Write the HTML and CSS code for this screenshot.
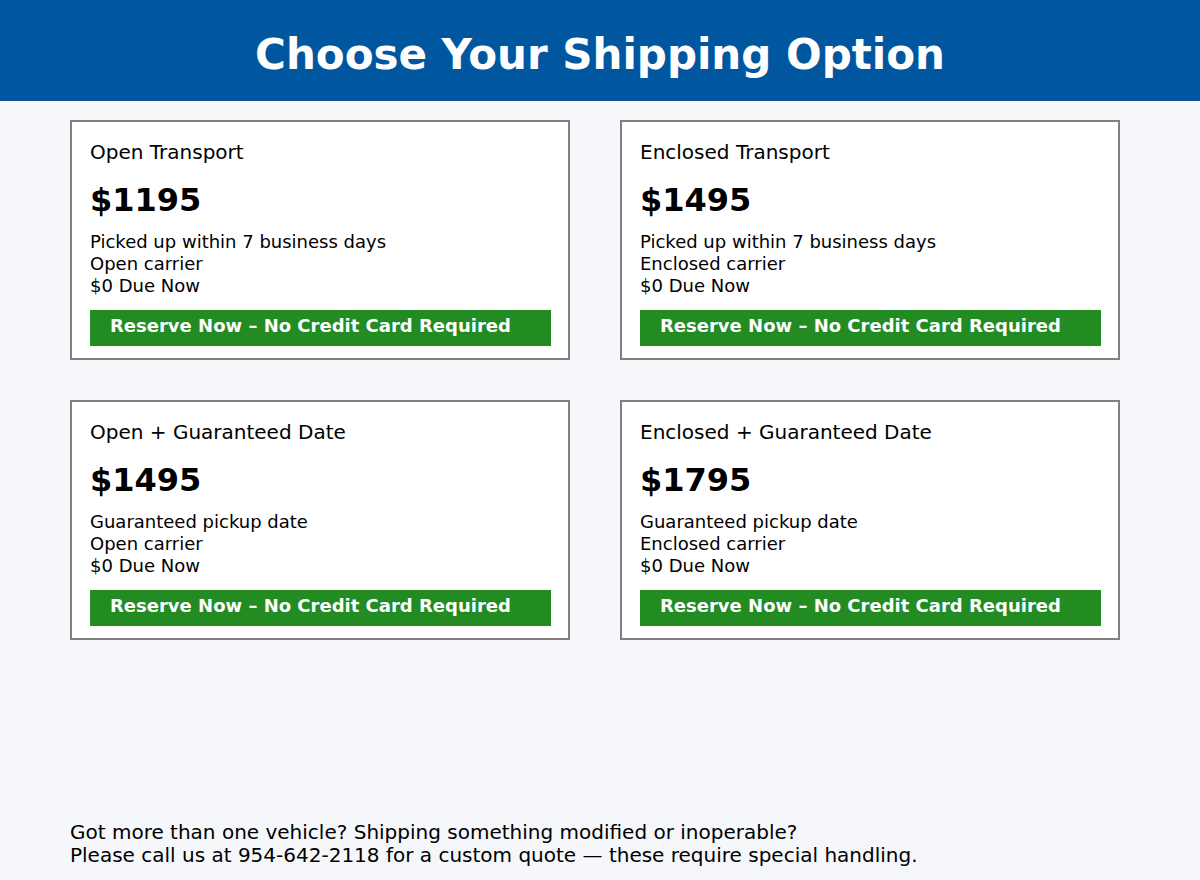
FILE: index.html
```html
<!DOCTYPE html>
<html lang="en">
<head>
<meta charset="utf-8">
<title>Choose Your Shipping Option</title>
<link rel="stylesheet" href="styles.css">
</head>
<body>
<header class="top">
  <h1 class="top-title">Choose Your Shipping Option</h1>
</header>
<main class="options">
  <section class="card">
    <h2 class="card-title">Open Transport</h2>
    <div class="price">$1195</div>
    <ul class="details">
      <li>Picked up within 7 business days</li>
      <li>Open carrier</li>
      <li>$0 Due Now</li>
    </ul>
    <a class="reserve" href="#">Reserve Now – No Credit Card Required</a>
  </section>
  <section class="card">
    <h2 class="card-title">Enclosed Transport</h2>
    <div class="price">$1495</div>
    <ul class="details">
      <li>Picked up within 7 business days</li>
      <li>Enclosed carrier</li>
      <li>$0 Due Now</li>
    </ul>
    <a class="reserve" href="#">Reserve Now – No Credit Card Required</a>
  </section>
  <section class="card">
    <h2 class="card-title">Open + Guaranteed Date</h2>
    <div class="price">$1495</div>
    <ul class="details">
      <li>Guaranteed pickup date</li>
      <li>Open carrier</li>
      <li>$0 Due Now</li>
    </ul>
    <a class="reserve" href="#">Reserve Now – No Credit Card Required</a>
  </section>
  <section class="card">
    <h2 class="card-title">Enclosed + Guaranteed Date</h2>
    <div class="price">$1795</div>
    <ul class="details">
      <li>Guaranteed pickup date</li>
      <li>Enclosed carrier</li>
      <li>$0 Due Now</li>
    </ul>
    <a class="reserve" href="#">Reserve Now – No Credit Card Required</a>
  </section>
</main>
<footer class="note">
  <p>Got more than one vehicle? Shipping something modified or inoperable?<br>Please call us at 954-642-2118 for a custom quote — these require special handling.</p>
</footer>
</body>
</html>
```

FILE: styles.css
```css
* { box-sizing: border-box; }

html, body {
  margin: 0;
  padding: 0;
}

body {
  min-height: 880px;
  display: flex;
  flex-direction: column;
  background: #f5f7fb;
  color: #000;
  font-family: "DejaVu Sans", "Liberation Sans", sans-serif;
}

.top {
  height: 101px;
  background: #0057a0;
  padding-top: 30px;
}

.top-title {
  margin: 0;
  text-align: center;
  color: #fff;
  font-size: 42px;
  font-weight: bold;
  line-height: 49px;
}

.options {
  display: grid;
  grid-template-columns: 500px 500px;
  column-gap: 50px;
  row-gap: 40px;
  padding: 19px 70px 0;
}

.card {
  background: #fff;
  border: 2px solid #808080;
  padding: 18px 17px 12px 18px;
}

.card-title {
  margin: 0;
  font-size: 20px;
  font-weight: normal;
  line-height: 24px;
}

.price {
  margin-top: 17px;
  font-size: 32px;
  font-weight: bold;
  line-height: 38px;
}

.details {
  list-style: none;
  margin: 12px 0 0;
  padding: 0;
  font-size: 18px;
  line-height: 22px;
}

.reserve {
  display: block;
  margin-top: 13px;
  height: 36px;
  padding: 5px 20px 0;
  background: #228b22;
  color: #fff;
  font-size: 18px;
  font-weight: bold;
  line-height: 21px;
  text-decoration: none;
}

.note {
  margin-top: auto;
  padding: 0 70px 13px;
}

.note p {
  margin: 0;
  font-size: 20px;
  line-height: 23px;
}
```
